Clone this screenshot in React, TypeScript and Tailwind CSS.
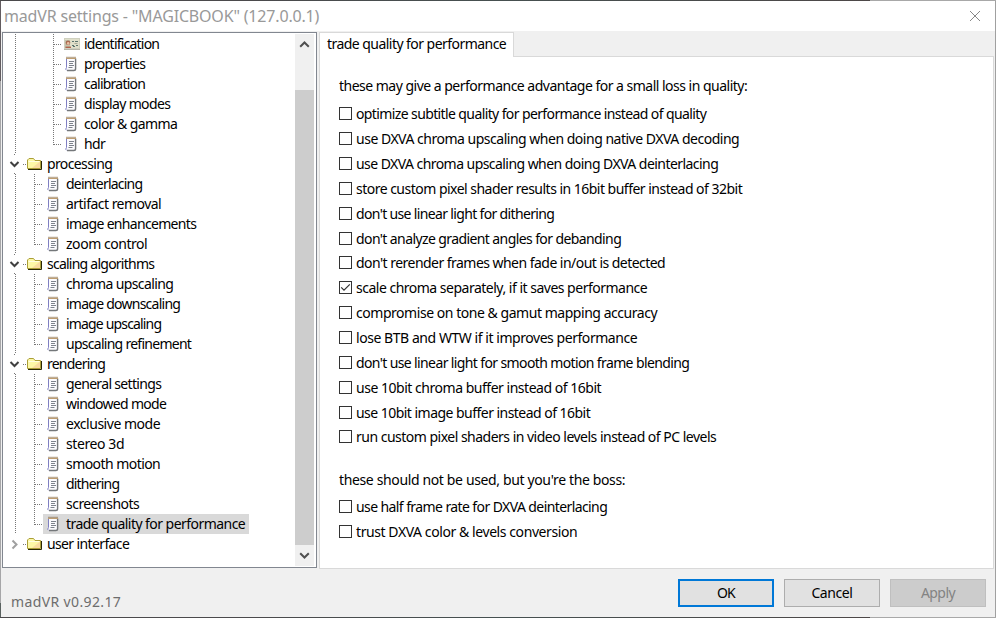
import { useLayoutEffect, useRef } from "react";

// Label whose tracking is adjusted so that it occupies a known width.
function Fit({ text, w, className = "" }: { text: string; w: number; className?: string }) {
  const ref = useRef<HTMLSpanElement>(null);
  useLayoutEffect(() => {
    const el = ref.current;
    if (!el) return;
    el.style.letterSpacing = "0px";
    const natural = el.getBoundingClientRect().width;
    el.style.letterSpacing = `${(w - 0.8 - natural) / text.length}px`;
  }, [text, w]);
  return (
    <span ref={ref} className={`whitespace-pre shrink-0 ${className}`}>
      {text}
    </span>
  );
}

const V = "bg-[repeating-linear-gradient(180deg,#777_0_1px,transparent_1px_2px)]";
const H = "bg-[repeating-linear-gradient(90deg,#777_0_1px,transparent_1px_2px)]";

function PageIcon() {
  return (
    <svg width="12" height="16" viewBox="0 0 12 16" className="shrink-0">
      <rect x="1" y="2" width="9.5" height="12.5" rx="1" fill="#fbfbfe" />
      <path d="M1.5 3v8.5L0.7 13.2L1.6 14.3" stroke="#7f7fc2" strokeWidth="1" fill="none" />
      <path d="M10.6 2.5v10.2q0 1.8-1.8 1.8H2" stroke="#74777a" strokeWidth="1.4" fill="none" />
      <path d="M1 2.5h10" stroke="#c9a87c" strokeWidth="1" />
      <path d="M1.5 1.5h9.5" stroke="#7a5c34" strokeWidth="1.4" strokeDasharray="1 1" />
      <path d="M4 5.5h5M4 7.5h4M4 9.5h5M3.5 11.5h4" stroke="#7d838c" />
    </svg>
  );
}

function CardIcon() {
  return (
    <svg width="16" height="12" viewBox="0 0 16 12" className="shrink-0">
      <rect x="0.5" y="0.5" width="15" height="10" fill="#e0e0ca" stroke="#cfd0bf" />
      <rect x="1" y="2" width="5" height="8" fill="#c3c4ad" />
      <circle cx="4" cy="4.8" r="2.3" fill="#a86a50" />
      <circle cx="4.2" cy="5.4" r="1.3" fill="#ecc0a2" />
      <path d="M1.5 9.3h5.5" stroke="#b0634c" strokeWidth="1.4" />
      <path d="M8 3.5h2M11 3.5h3M8 7.5h2M12 7.5h2M9 8.5h2" stroke="#5b756e" />
      <path d="M10.5 5.5h3" stroke="#a5aa98" />
      <path d="M0 11.5h16" stroke="#b5b4a8" />
    </svg>
  );
}

function FolderIcon() {
  return (
    <svg width="16" height="14" viewBox="0 0 16 14" className="shrink-0">
      <path d="M0.5 11.5V3L2 1.5h4.5L8 3.5h5.5v8z" fill="#fdf8a6" stroke="#ab9f38" />
      <path d="M1.5 4.5h11" stroke="#fffee4" />
      <path d="M5 11L13 4.5V11z" fill="#f8dba0" />
      <path d="M1 12.5h13.5V4" stroke="#2a2805" fill="none" />
    </svg>
  );
}

function Chevron({ open }: { open: boolean }) {
  return (
    <svg width="11" height="11" viewBox="0 0 11 11">
      {open ? (
        <path d="M1.5 3l4 4 4-4" stroke="#404040" strokeWidth="2" fill="none" />
      ) : (
        <path d="M3.5 1.5l4 4-4 4" stroke="#a0a0a0" strokeWidth="2" fill="none" />
      )}
    </svg>
  );
}

type Item = { t: string; w: number; d: 1 | 2 | 3; last?: boolean; shut?: boolean; sel?: boolean };

const items: Item[] = [
  { t: "identification", w: 76, d: 3 },
  { t: "properties", w: 62, d: 3 },
  { t: "calibration", w: 62, d: 3 },
  { t: "display modes", w: 87, d: 3 },
  { t: "color & gamma", w: 94, d: 3 },
  { t: "hdr", w: 22, d: 3, last: true },
  { t: "processing", w: 66, d: 1 },
  { t: "deinterlacing", w: 77, d: 2 },
  { t: "artifact removal", w: 96, d: 2 },
  { t: "image enhancements", w: 131, d: 2 },
  { t: "zoom control", w: 82, d: 2, last: true },
  { t: "scaling algorithms", w: 108, d: 1 },
  { t: "chroma upscaling", w: 108, d: 2 },
  { t: "image downscaling", w: 115, d: 2 },
  { t: "image upscaling", w: 96, d: 2 },
  { t: "upscaling refinement", w: 126, d: 2, last: true },
  { t: "rendering", w: 59, d: 1 },
  { t: "general settings", w: 96, d: 2 },
  { t: "windowed mode", w: 101, d: 2 },
  { t: "exclusive mode", w: 95, d: 2 },
  { t: "stereo 3d", w: 59, d: 2 },
  { t: "smooth motion", w: 95, d: 2 },
  { t: "dithering", w: 54, d: 2 },
  { t: "screenshots", w: 74, d: 2 },
  { t: "trade quality for performance", w: 180, d: 2, last: true, sel: true },
  { t: "user interface", w: 83, d: 1, shut: true },
];

function TreeRow({ it }: { it: Item }) {
  if (it.d === 1) {
    return (
      <div className="flex h-5 shrink-0 items-center">
        <div className="flex h-5 w-5 shrink-0 flex-col items-center justify-between pl-[3px]">
          <div className={`h-px w-px ${it.shut ? "" : V}`} />
          <Chevron open={!it.shut} />
          <div className={`h-px w-px ${it.shut ? "" : V}`} />
        </div>
        <div className={`h-px w-[3px] shrink-0 ${H}`} />
        <div className="w-px shrink-0" />
        <FolderIcon />
        <Fit text={it.t} w={it.w} className="ml-1" />
      </div>
    );
  }
  const card = it.t === "identification";
  return (
    <div className="flex h-5 shrink-0 items-center">
      <div className={`ml-3 h-5 w-px shrink-0 ${V}`} />
      <div className={`h-5 shrink-0 ${it.d === 3 ? "w-[37px]" : "w-[18px]"}`} />
      <div className="h-5 w-px shrink-0">
        <div className={`w-px ${V} ${it.last ? "h-[11px]" : "h-5"}`} />
      </div>
      <div className={`h-px w-2 shrink-0 ${H}`} />
      <div className={`flex h-5 items-center pr-1 ${it.sel ? "bg-[#d9d9d9]" : ""} ${card ? "pl-[2px]" : it.d === 3 ? "pl-[3px]" : "pl-1"}`}>
        {card ? <CardIcon /> : <PageIcon />}
        <Fit text={it.t} w={it.w} className={card ? "ml-1" : it.d === 3 ? "ml-[7px]" : "ml-[7px]"} />
      </div>
    </div>
  );
}

type Opt = { t: string; w: number; on?: boolean; short?: boolean };

const main: Opt[] = [
  { t: "optimize subtitle quality for performance instead of quality", w: 351 },
  { t: "use DXVA chroma upscaling when doing native DXVA decoding", w: 384 },
  { t: "use DXVA chroma upscaling when doing DXVA deinterlacing", w: 363 },
  { t: "store custom pixel shader results in 16bit buffer instead of 32bit", w: 387 },
  { t: "don't use linear light for dithering", w: 199 },
  { t: "don't analyze gradient angles for debanding", w: 266, short: true },
  { t: "don't rerender frames when fade in/out is detected", w: 310 },
  { t: "scale chroma separately, if it saves performance", w: 292, on: true },
  { t: "compromise on tone & gamut mapping accuracy", w: 302 },
  { t: "lose BTB and WTW if it improves performance", w: 282 },
  { t: "don't use linear light for smooth motion frame blending", w: 334 },
  { t: "use 10bit chroma buffer instead of 16bit", w: 246 },
  { t: "use 10bit image buffer instead of 16bit", w: 235, short: true },
  { t: "run custom pixel shaders in video levels instead of PC levels", w: 361 },
];

const boss: Opt[] = [
  { t: "use half frame rate for DXVA deinterlacing", w: 252 },
  { t: "trust DXVA color & levels conversion", w: 222 },
];

function Option({ o }: { o: Opt }) {
  return (
    <label className={`flex items-start ${o.short ? "h-6" : "h-[25px]"}`}>
      <span className="mt-[6px] flex size-[13px] shrink-0 items-center justify-center border border-[#333] bg-white">
        {o.on && (
          <svg width="11" height="11" viewBox="0 0 11 11">
            <path d="M1.2 5.4l2.8 2.8 5.8-5.8" stroke="#333" strokeWidth="1.2" fill="none" />
          </svg>
        )}
      </span>
      <Fit text={o.t} w={o.w} className="ml-1 mt-[3px]" />
    </label>
  );
}

export default function App() {
  return (
    <div className="flex h-[618px] w-[996px] overflow-hidden bg-[linear-gradient(90deg,#4b4a4c_0_250px,#465050_500px,#4d4848_870px,#a8a8a8_870px)] py-px font-['Noto_Sans','Open_Sans',sans-serif] text-[14px] leading-5 text-black">
      <div className="w-px shrink-0 bg-[linear-gradient(180deg,#625c60_0_80px,#a6a6a8_80px_602px,#59615f_602px)]" />
      <div className="flex w-[994px] flex-col bg-[#f0f0f0]">
        <header className="flex h-[30px] shrink-0 items-center justify-between bg-white pl-[3px] pr-[14px]">
          <Fit text={'madVR settings - "MAGICBOOK" (127.0.0.1)'} w={316} className="text-[16px] text-[#999]" />
          <svg width="12" height="12" viewBox="0 0 12 12" className="mt-[-1px]">
            <path d="M1 1l10 10M11 1L1 11" stroke="#888" strokeWidth="1" />
          </svg>
        </header>
        <div className="mt-px flex h-[537px] shrink-0 pl-px">
          <aside className="flex h-[536px] w-[315px] shrink-0 justify-between border border-[#828790] bg-white pr-[2px] pt-px">
            <div className="flex flex-col">
              {items.map((it) => (
                <TreeRow key={it.t} it={it} />
              ))}
            </div>
            <div className="flex h-[532px] w-[19px] flex-col bg-[#f0f0f0]">
              <div className="flex h-[56px] items-start justify-center pt-[6px]">
                <svg width="11" height="9" viewBox="0 0 11 9">
                  <path d="M1.2 6.8l4.3-4.3 4.3 4.3" stroke="#505050" strokeWidth="2" fill="none" />
                </svg>
              </div>
              <div className="h-[455px] bg-[#cdcdcd]" />
              <div className="flex h-5 items-center justify-center">
                <svg width="11" height="9" viewBox="0 0 11 9">
                  <path d="M1.2 2.2l4.3 4.3 4.3-4.3" stroke="#505050" strokeWidth="2" fill="none" />
                </svg>
              </div>
            </div>
          </aside>
          <main className="ml-[2px] flex w-[675px] flex-col">
            <div className="flex h-[25px] shrink-0">
              <div className="h-[25px] w-[195px] border border-b-0 border-[#d9d9d9] bg-white pl-[7px] pt-px">
                <Fit text="trade quality for performance" w={180} />
              </div>
              <div className="h-[25px] grow border-b border-[#d9d9d9]" />
            </div>
            <section className="flex grow flex-col border border-t-0 border-[#d9d9d9] bg-white pl-[19px]">
              <div className="mt-[19px] flex h-[25px]">
                <Fit text="these may give a performance advantage for a small loss in quality:" w={409} />
              </div>
              {main.map((o) => (
                <Option key={o.t} o={o} />
              ))}
              <div className="mt-[21px] flex h-6">
                <Fit text="these should not be used, but you're the boss:" w={287} />
              </div>
              {boss.map((o) => (
                <Option key={o.t} o={o} />
              ))}
            </section>
          </main>
        </div>
        <footer className="flex grow items-start pl-[10px] pr-[9px] pt-[10px]">
          <Fit text="madVR v0.92.17" w={111} className="mt-[13px] text-[#6d6d6d]" />
          <div className="ml-auto flex gap-[10px]">
            <button className="flex h-7 w-24 items-center justify-center border-2 border-[#0078d7] bg-[#e1e1e1]">
              <Fit text="OK" w={19} />
            </button>
            <button className="flex h-7 w-24 items-center justify-center border border-[#adadad] bg-[#e1e1e1]">
              <Fit text="Cancel" w={42} />
            </button>
            <button className="flex h-7 w-24 items-center justify-center border border-[#bfbfbf] bg-[#ccc] text-[#838383]">
              <Fit text="Apply" w={35} />
            </button>
          </div>
        </footer>
      </div>
      <div className="w-px shrink-0 bg-[#a0a0a0]" />
    </div>
  );
}
